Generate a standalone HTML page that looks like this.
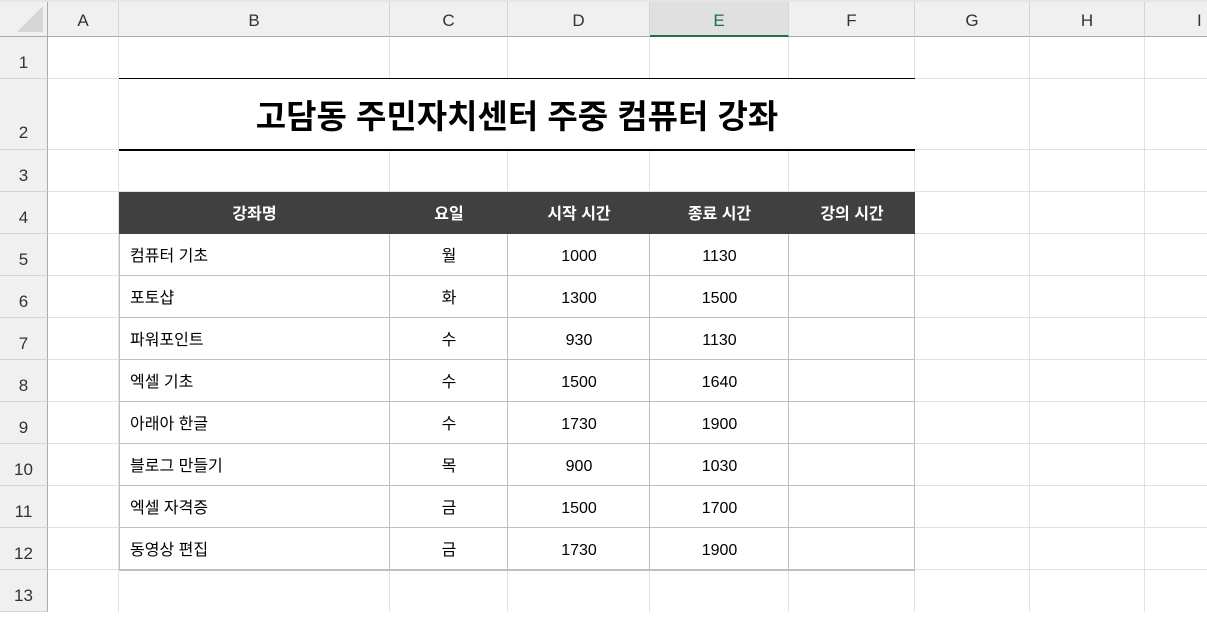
<!DOCTYPE html>
<html><head><meta charset="utf-8"><style>
body{margin:0;width:1207px;height:612px;overflow:hidden;background:#fff;font-family:"Liberation Sans","Noto Sans CJK KR",sans-serif;position:relative}
div{position:absolute;box-sizing:border-box}
.ch{top:2px;height:35px;background:#f0f0f0;border-right:1px solid #d4d4d4;border-bottom:1px solid #ababab;text-align:center;line-height:37px;font-size:17px;color:#333}
.rh{left:0;width:48px;background:#f0f0f0;border-right:1px solid #ababab;border-bottom:1px solid #d4d4d4;text-align:center;font-size:17px;color:#333}
.vl{top:37px;bottom:0;width:1px;background:#e1e1e1}
.hl{left:48px;right:0;height:1px;background:#e1e1e1}
.t{font-size:16px;color:#000;height:42px;line-height:46px}
.h{font-size:16px;color:#fff;height:42px;line-height:45px;text-align:center;font-weight:bold}
</style></head><body>
<div style="left:0;top:0;width:1207px;height:2px;background:#e6e6e6"></div>
<div class="ch" style="left:0;width:48px;border-right:1px solid #ababab"><div style="right:4px;bottom:4px;width:0;height:0;border-left:26px solid transparent;border-bottom:26px solid #d6d6d6"></div></div>
<div class="ch" style="left:48px;width:71px">A</div>
<div class="ch" style="left:119px;width:271px">B</div>
<div class="ch" style="left:390px;width:118px">C</div>
<div class="ch" style="left:508px;width:142px">D</div>
<div class="ch" style="left:650px;width:139px;background:#e0e0e0;color:#1e6e42;border-bottom:2px solid #1e7145">E</div>
<div class="ch" style="left:789px;width:126px">F</div>
<div class="ch" style="left:915px;width:115px">G</div>
<div class="ch" style="left:1030px;width:115px">H</div>
<div class="ch" style="left:1145px;width:80px;text-align:left;padding-left:52px">I</div>

<div class="rh" style="top:37px;height:42px;line-height:52px">1</div>
<div class="rh" style="top:79px;height:71px;line-height:108px">2</div>
<div class="rh" style="top:150px;height:42px;line-height:52px">3</div>
<div class="rh" style="top:192px;height:42px;line-height:52px">4</div>
<div class="rh" style="top:234px;height:42px;line-height:52px">5</div>
<div class="rh" style="top:276px;height:42px;line-height:52px">6</div>
<div class="rh" style="top:318px;height:42px;line-height:52px">7</div>
<div class="rh" style="top:360px;height:42px;line-height:52px">8</div>
<div class="rh" style="top:402px;height:42px;line-height:52px">9</div>
<div class="rh" style="top:444px;height:42px;line-height:52px">10</div>
<div class="rh" style="top:486px;height:42px;line-height:52px">11</div>
<div class="rh" style="top:528px;height:42px;line-height:52px">12</div>
<div class="rh" style="top:570px;height:42px;line-height:52px">13</div>

<div class="vl" style="left:118px"></div><div class="vl" style="left:389px"></div><div class="vl" style="left:507px"></div><div class="vl" style="left:649px"></div><div class="vl" style="left:788px"></div><div class="vl" style="left:914px"></div><div class="vl" style="left:1029px"></div><div class="vl" style="left:1144px"></div>
<div class="hl" style="top:78px"></div><div class="hl" style="top:149px"></div><div class="hl" style="top:191px"></div><div class="hl" style="top:233px"></div><div class="hl" style="top:275px"></div><div class="hl" style="top:317px"></div><div class="hl" style="top:359px"></div><div class="hl" style="top:401px"></div><div class="hl" style="top:443px"></div><div class="hl" style="top:485px"></div><div class="hl" style="top:527px"></div><div class="hl" style="top:569px"></div>

<div style="left:119px;top:78px;width:796px;height:73px;background:#fff;border-top:1px solid #000;border-bottom:2px solid #000;text-align:center;line-height:76px;font-size:33px;font-weight:bold">고담동 주민자치센터 주중 컴퓨터 강좌</div>

<div style="left:119px;top:192px;width:796px;height:42px;background:#404040"></div>
<div class="h" style="left:119px;top:192px;width:271px">강좌명</div>
<div class="h" style="left:390px;top:192px;width:118px">요일</div>
<div class="h" style="left:508px;top:192px;width:142px">시작 시간</div>
<div class="h" style="left:650px;top:192px;width:139px">종료 시간</div>
<div class="h" style="left:789px;top:192px;width:126px">강의 시간</div>

<div style="left:119px;top:234px;width:796px;height:337px;border:1px solid #bfbfbf;border-top:none;background:
linear-gradient(#bfbfbf,#bfbfbf) 269px 0/1px 100% no-repeat,
linear-gradient(#bfbfbf,#bfbfbf) 387px 0/1px 100% no-repeat,
linear-gradient(#bfbfbf,#bfbfbf) 529px 0/1px 100% no-repeat,
linear-gradient(#bfbfbf,#bfbfbf) 668px 0/1px 100% no-repeat,
repeating-linear-gradient(#fff 0 41px,#bfbfbf 41px 42px)"></div>

<div style="left:119px;top:234px;width:796px">
<div class="t" style="left:11px;top:0">컴퓨터 기초</div><div class="t" style="left:271px;width:118px;text-align:center;top:0">월</div><div class="t" style="left:389px;width:142px;text-align:center;top:0">1000</div><div class="t" style="left:531px;width:139px;text-align:center;top:0">1130</div>
<div class="t" style="left:11px;top:42px">포토샵</div><div class="t" style="left:271px;width:118px;text-align:center;top:42px">화</div><div class="t" style="left:389px;width:142px;text-align:center;top:42px">1300</div><div class="t" style="left:531px;width:139px;text-align:center;top:42px">1500</div>
<div class="t" style="left:11px;top:84px">파워포인트</div><div class="t" style="left:271px;width:118px;text-align:center;top:84px">수</div><div class="t" style="left:389px;width:142px;text-align:center;top:84px">930</div><div class="t" style="left:531px;width:139px;text-align:center;top:84px">1130</div>
<div class="t" style="left:11px;top:126px">엑셀 기초</div><div class="t" style="left:271px;width:118px;text-align:center;top:126px">수</div><div class="t" style="left:389px;width:142px;text-align:center;top:126px">1500</div><div class="t" style="left:531px;width:139px;text-align:center;top:126px">1640</div>
<div class="t" style="left:11px;top:168px">아래아 한글</div><div class="t" style="left:271px;width:118px;text-align:center;top:168px">수</div><div class="t" style="left:389px;width:142px;text-align:center;top:168px">1730</div><div class="t" style="left:531px;width:139px;text-align:center;top:168px">1900</div>
<div class="t" style="left:11px;top:210px">블로그 만들기</div><div class="t" style="left:271px;width:118px;text-align:center;top:210px">목</div><div class="t" style="left:389px;width:142px;text-align:center;top:210px">900</div><div class="t" style="left:531px;width:139px;text-align:center;top:210px">1030</div>
<div class="t" style="left:11px;top:252px">엑셀 자격증</div><div class="t" style="left:271px;width:118px;text-align:center;top:252px">금</div><div class="t" style="left:389px;width:142px;text-align:center;top:252px">1500</div><div class="t" style="left:531px;width:139px;text-align:center;top:252px">1700</div>
<div class="t" style="left:11px;top:294px">동영상 편집</div><div class="t" style="left:271px;width:118px;text-align:center;top:294px">금</div><div class="t" style="left:389px;width:142px;text-align:center;top:294px">1730</div><div class="t" style="left:531px;width:139px;text-align:center;top:294px">1900</div>
</div>
</body></html>
